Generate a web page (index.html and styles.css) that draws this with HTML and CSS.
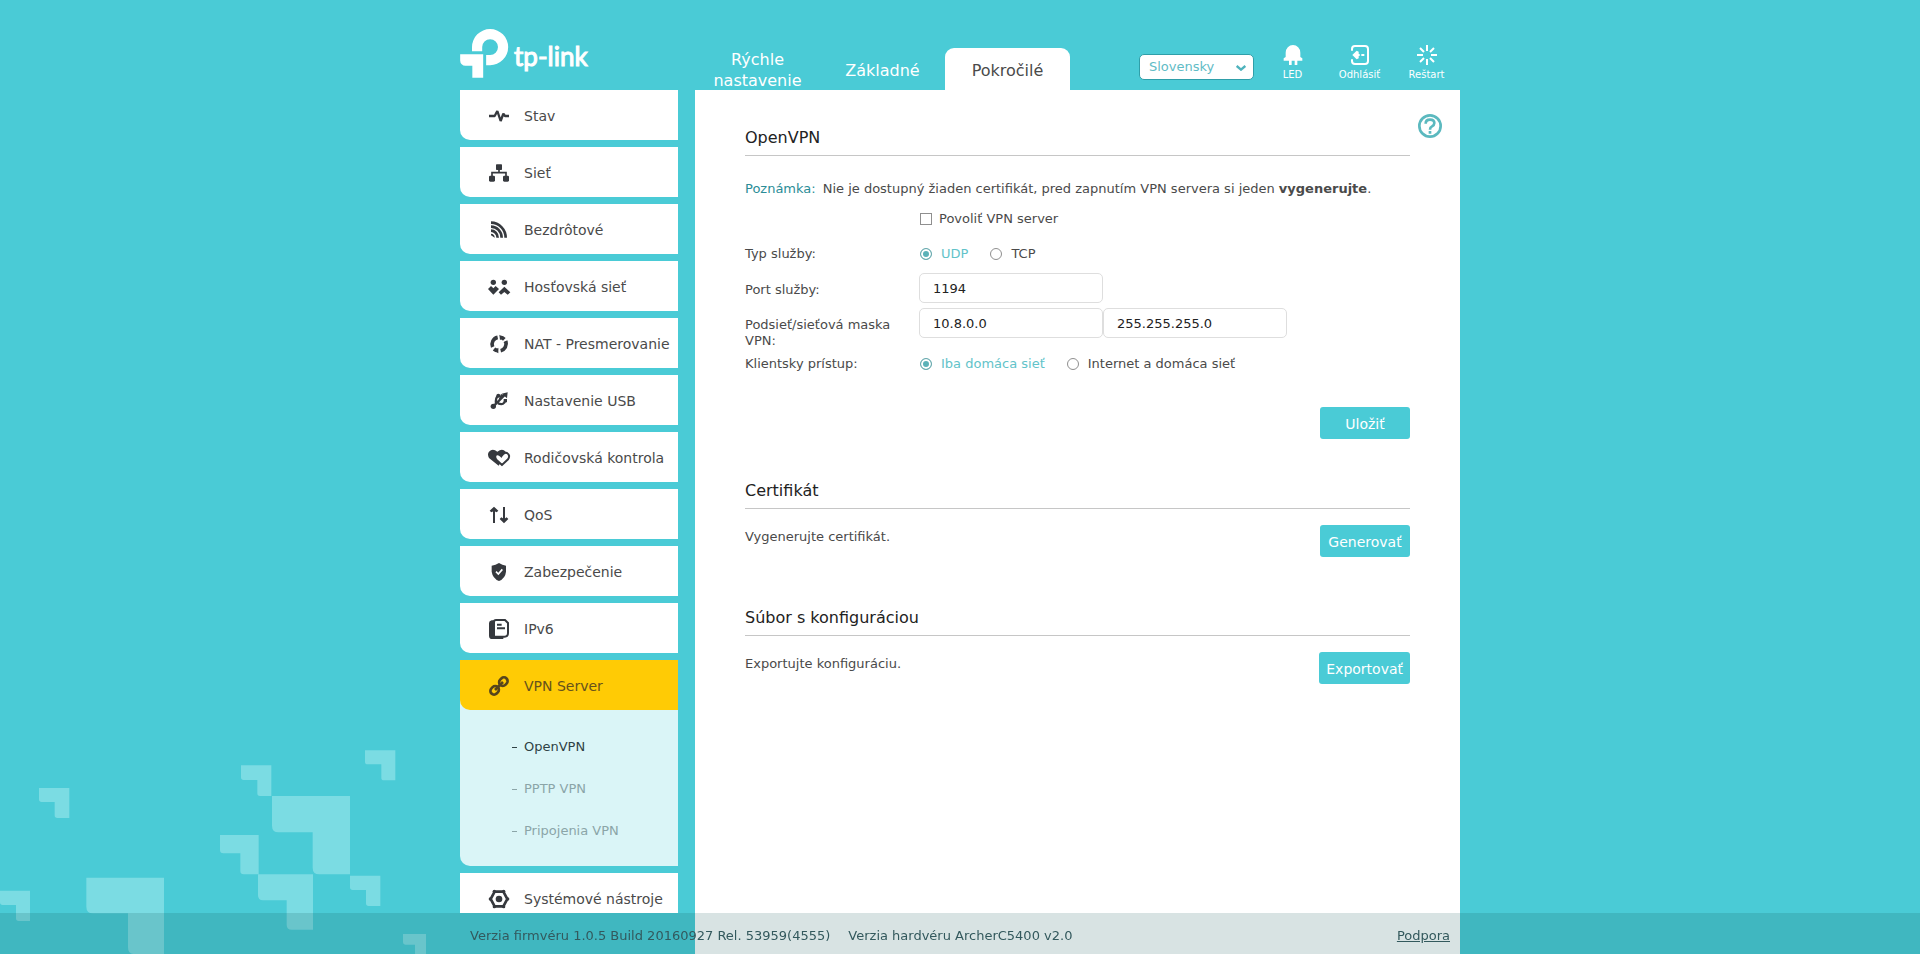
FILE: index.html
```html
<!DOCTYPE html>
<html lang="sk">
<head>
<meta charset="utf-8">
<meta name="viewport" content="width=device-width, initial-scale=1">
<title>tp-link – OpenVPN</title>
<link rel="stylesheet" href="styles.css">
</head>
<body>
<svg class="backdrop" viewBox="0 0 1350 672" aria-hidden="true">
  <path d="M117 174H208V264H172Q164 264 164 256V216H125Q117 216 117 208Z"/>
  <path d="M723 106H814V198H780Q772 198 772 190V150H731Q723 150 723 142Z"/>
  <path d="M1095 61H1186V151H1152Q1144 151 1144 143V103H1103Q1095 103 1095 95Z"/>
  <path d="M816 198H1050V433H958Q938 433 938 413V307H836Q816 307 816 287Z"/>
  <path d="M660 315H776V433H731Q721 433 721 423V370H670Q660 370 660 360Z"/>
  <path d="M774 433H939V599H875Q860 599 860 584V511H789Q774 511 774 496Z"/>
  <path d="M1050 437H1141V528H1106Q1098 528 1098 520V480H1058Q1050 480 1050 472Z"/>
  <path d="M259 443H492V672H400Q384 672 384 652V550H279Q259 550 259 530Z"/>
  <path d="M0 482H90V573H56Q48 573 48 565V525H8Q0 525 0 517Z"/>
  <path d="M1209 612H1278V672H1245V644H1216Q1209 644 1209 637Z"/>
</svg>

<div class="page">
  <header class="header">
    <a class="logo" href="#" aria-label="tp-link">
      <svg class="logo-mark" viewBox="0 0 148 149" aria-hidden="true">
        <path d="M36 68V55A55 55 0 0 1 91 0a55 55 0 0 1 0 110H79V79h12a24 24 0 1 0-24-24V68z"/>
        <path d="M0 77H70V148H37V112H16A16 16 0 0 1 0 96Z"/>
      </svg>
      <span class="logo-text">tp-link</span>
    </a>
    <nav class="tabs" aria-label="Režim">
      <a class="tab" href="#">Rýchle nastavenie</a>
      <a class="tab" href="#">Základné</a>
      <a class="tab tab-active" href="#" aria-current="page">Pokročilé</a>
    </nav>
    <div class="tools">
      <div class="language">
        <select aria-label="Jazyk"><option>Slovensky</option></select>
        <svg class="chevron" viewBox="0 0 30 18" aria-hidden="true"><path d="M2 3L15 14L28 3"/></svg>
      </div>
      <button class="tool" type="button">
        <svg viewBox="0 0 60 60" aria-hidden="true"><path d="M8 36V23A22 23 0 0 1 52 23V36L58 40V47H43V60H35V47H26V60H18V47H2V40L8 36Z" fill="currentColor"/></svg>
        LED
      </button>
      <button class="tool" type="button">
        <svg viewBox="0 0 60 60" aria-hidden="true"><g fill="none" stroke="currentColor" stroke-width="6"><path d="M6 17V12Q6 3 15 3H45Q54 3 54 12V48Q54 57 45 57H15Q6 57 6 48V43"/><path d="M19 30H29M34 30H43"/></g><path d="M7 30L20 17L26 20V40L20 43Z" fill="currentColor"/></svg>
        Odhlásiť
      </button>
      <button class="tool" type="button">
        <svg viewBox="0 0 60 60" aria-hidden="true"><path fill="none" stroke="currentColor" stroke-width="6" d="M30 0V18M30 42V60M0 30H18M42 30H60M9 9L21 21M39 39L51 51M51 9L39 21M21 39L9 51"/></svg>
        Reštart
      </button>
    </div>
  </header>

  <div class="columns">
    <nav class="menu" aria-label="Menu">
      <a class="item" href="#"><svg viewBox="0 0 60 60" aria-hidden="true"><path class="line" d="M0 30H17L25 15L35 45L43 23L48 30H60" stroke-width="7" stroke-linejoin="bevel"/></svg>Stav</a>
      <a class="item" href="#"><svg viewBox="0 0 60 60" aria-hidden="true"><rect x="21" y="4" width="18" height="17" rx="2"/><rect x="0" y="38" width="18" height="18" rx="4"/><rect x="42" y="38" width="18" height="18" rx="4"/><path class="line" stroke-width="5" d="M30 20V30M9 39V29H51V39"/></svg>Sieť</a>
      <a class="item" href="#"><svg viewBox="0 0 60 60" aria-hidden="true"><path class="line" stroke-width="8" d="M6 8A44 45 0 0 1 50 53M6 20A32 33 0 0 1 38 53M6 32A20 21 0 0 1 26 53"/><path d="M6 41A12 12 0 0 1 17 53L6 46Z"/></svg>Bezdrôtové</a>
      <a class="item" href="#"><svg viewBox="0 0 60 60" aria-hidden="true"><circle cx="13" cy="16" r="8"/><circle cx="46" cy="16" r="8"/><path d="M-3 36L6 27L13 34L20 27L30 36L13 53Z"/><path d="M46 29L64 46L56 53L46 45L36 53L29 46Z"/></svg>Hosťovská sieť</a>
      <a class="item" href="#"><svg viewBox="0 0 60 60" aria-hidden="true"><path class="line" stroke-width="11" d="M34 10A21 21 0 0 1 46 16M50 22A21 21 0 0 1 35 50M27 50A21 21 0 0 1 15 45M11 39A21 21 0 0 1 26 10"/><path d="M31 2L42 10L33 18ZM43 25L55 19L56 31ZM28 58L18 50L28 41Z"/></svg>NAT - Presmerovanie</a>
      <a class="item" href="#"><svg viewBox="0 0 60 60" aria-hidden="true"><circle cx="13" cy="46" r="8"/><circle cx="28" cy="14" r="6"/><path class="line" stroke-width="7" d="M13 46L47 12M21 38Q19 19 28 14M27 37Q46 44 49 28M32 27L39 10"/><path d="M38 8L56 4L54 22ZM44 24H54V34H44Z"/></svg>Nastavenie USB</a>
      <a class="item" href="#"><svg viewBox="0 0 60 60" aria-hidden="true"><path d="M29 53L0 30Q-6 18 0 11Q11 0 25 11Q40 0 50 11L38 38Z"/><path class="heart" d="M39 51L22 35Q16 26 21 20Q28 15 37 25Q46 11 54 15Q65 22 57 34Z"/></svg>Rodičovská kontrola</a>
      <a class="item" href="#"><svg viewBox="0 0 60 60" aria-hidden="true"><path class="line" stroke-width="6" d="M15 54V14M45 6V46"/><path d="M15 5L28 17L23 22L15 18L7 22L2 17ZM45 55L58 42L53 37L45 42L37 37L32 42Z"/></svg>QoS</a>
      <a class="item" href="#"><svg viewBox="0 0 60 60" aria-hidden="true"><path d="M30 3Q40 9 51 11V29Q49 49 30 57Q11 49 8 29V11Q20 9 30 3Z"/><path class="tick" d="M21 29L28 36L40 22"/></svg>Zabezpečenie</a>
      <a class="item" href="#"><svg viewBox="0 0 60 60" aria-hidden="true"><path d="M8 4H16V52H43V60H10Q0 60 0 50V12Q0 6 8 4Z"/><path class="line" stroke-width="6" d="M15 9Q15 3 21 3H48L57 12V42Q57 53 47 53H15ZM24 17H38M24 28H48"/></svg>IPv6</a>
      <a class="item item-active" href="#" aria-current="true"><svg viewBox="0 0 60 60" aria-hidden="true"><g transform="rotate(-45 30 30)"><rect class="line" x="-2" y="19" width="27" height="22" rx="11" stroke-width="8"/><rect class="line" x="35" y="19" width="27" height="22" rx="11" stroke-width="8"/><path class="line" stroke-width="8" d="M13 30H47"/></g></svg>VPN Server</a>
      <ul class="submenu">
        <li><a class="sub sub-active" href="#">OpenVPN</a></li>
        <li><a class="sub" href="#">PPTP VPN</a></li>
        <li><a class="sub" href="#">Pripojenia VPN</a></li>
      </ul>
      <a class="item" href="#"><svg viewBox="0 0 60 60" aria-hidden="true"><path class="line" stroke-width="8" d="M17 8H43L55 30L43 52H17L5 30Z"/><circle cx="30" cy="30" r="10"/><circle cx="16" cy="7" r="5"/><circle cx="44" cy="7" r="5"/><circle cx="4" cy="30" r="5"/><circle cx="56" cy="30" r="5"/><circle cx="16" cy="53" r="5"/><circle cx="44" cy="53" r="5"/></svg>Systémové nástroje</a>
    </nav>

    <main class="content">
      <button class="help" type="button" aria-label="Pomoc">
        <svg viewBox="0 0 72 72" aria-hidden="true"><circle cx="36" cy="36" r="32"/><path d="M23 29Q23 17 36 17Q49 17 49 27Q49 33 42 37Q36 40 36 47M36 51V59"/></svg>
      </button>

      <section class="section">
        <h2>OpenVPN</h2>
        <p class="note"><span class="note-tag">Poznámka:</span>Nie je dostupný žiaden certifikát, pred zapnutím VPN servera si jeden <b>vygenerujte</b>.</p>
        <form>
          <div class="row row-check">
            <label class="choice"><input type="checkbox">Povoliť VPN server</label>
          </div>
          <div class="row row-type" role="radiogroup" aria-labelledby="type-label">
            <span id="type-label">Typ služby:</span>
            <div class="choices">
              <label class="choice"><input type="radio" name="type" checked><span>UDP</span></label>
              <label class="choice"><input type="radio" name="type"><span>TCP</span></label>
            </div>
          </div>
          <div class="row row-field">
            <label for="port">Port služby:</label>
            <input class="text" id="port" type="text" value="1194">
          </div>
          <div class="row row-field">
            <label for="subnet">Podsieť/sieťová maska VPN:</label>
            <div class="pair">
              <input class="text" id="subnet" type="text" value="10.8.0.0">
              <input class="text" type="text" value="255.255.255.0" aria-label="Sieťová maska VPN">
            </div>
          </div>
          <div class="row row-access" role="radiogroup" aria-labelledby="access-label">
            <span id="access-label">Klientsky prístup:</span>
            <div class="choices">
              <label class="choice"><input type="radio" name="access" checked><span>Iba domáca sieť</span></label>
              <label class="choice"><input type="radio" name="access"><span>Internet a domáca sieť</span></label>
            </div>
          </div>
          <div class="submit"><button class="action" type="button">Uložiť</button></div>
        </form>
      </section>

      <section class="section">
        <h2>Certifikát</h2>
        <div class="task"><p>Vygenerujte certifikát.</p><button class="action" type="button">Generovať</button></div>
      </section>

      <section class="section">
        <h2>Súbor s konfiguráciou</h2>
        <div class="task"><p>Exportujte konfiguráciu.</p><button class="action" type="button">Exportovať</button></div>
      </section>
    </main>
  </div>
</div>

<footer class="footer">
  <div class="footer-inner">
    <span>Verzia firmvéru 1.0.5 Build 20160927 Rel. 53959(4555)</span>
    <span>Verzia hardvéru ArcherC5400 v2.0</span>
    <a class="support" href="#">Podpora</a>
  </div>
</footer>
</body>
</html>
```

FILE: styles.css
```css
:root {
  --teal: #4acbd6;
  --ink: #4a4a4a;
  --icon: #36393e;
  --header: 90px;
  --footer: 41px;
}

* {
  box-sizing: border-box;
}

body {
  margin: 0;
  height: 100vh;
  overflow: hidden;
  background: var(--teal);
  color: var(--ink);
  font: 13px/16px "DejaVu Sans", Verdana, sans-serif;
}

a {
  color: inherit;
  text-decoration: none;
}

h2,
p,
ul {
  margin: 0;
  padding: 0;
}

button,
input,
select {
  font: inherit;
}

.backdrop {
  position: fixed;
  left: 0;
  bottom: 0;
  width: 450px;
  fill: #7bdce3;
}

.page {
  position: relative;
  display: flex;
  flex-direction: column;
  max-width: 1000px;
  min-height: 100vh;
  margin: 0 auto;
}

/* Header */
.header {
  display: flex;
  height: var(--header);
  color: #fff;
}

.logo {
  display: flex;
  align-items: flex-start;
  gap: 5px;
  width: 235px;
  padding-top: 29px;
}

.logo-mark {
  width: 49px;
  height: 49px;
  fill: #fff;
}

.logo-text {
  padding-top: 9px;
  font: 26px/36px Lato, sans-serif;
  -webkit-text-stroke: 1px #fff;
}

.tabs {
  display: flex;
  align-items: flex-end;
}

.tab {
  display: flex;
  align-items: center;
  justify-content: center;
  width: 125px;
  height: 42px;
  padding-top: 2px;
  font-size: 16px;
  line-height: 21px;
  text-align: center;
}

.tab-active {
  border-radius: 9px 9px 0 0;
  background: #fff;
  color: var(--ink);
}

.tools {
  display: flex;
  align-items: flex-start;
  margin-left: auto;
}

.language {
  position: relative;
  margin: 54px 5px 0 0;
}

.language select {
  appearance: none;
  display: block;
  width: 115px;
  height: 26px;
  padding: 0 9px;
  border: 1px solid #2f9fa9;
  border-radius: 5px;
  background: #fff;
  color: #5fbcc6;
}

.chevron {
  position: absolute;
  top: 11px;
  right: 8px;
  width: 10px;
  height: 6px;
  fill: none;
  stroke: #4fb3bd;
  stroke-width: 7;
  pointer-events: none;
}

.tool {
  display: flex;
  flex-direction: column;
  align-items: center;
  gap: 4px;
  width: 67px;
  margin-top: 45px;
  padding: 0;
  border: 0;
  background: none;
  color: #fff;
  font-size: 10px;
  line-height: 12px;
}

.tool svg {
  width: 20px;
  height: 20px;
}

.columns {
  display: flex;
  flex: 1;
  gap: 17px;
}

/* Side menu */
.menu {
  flex: 0 0 218px;
  max-height: calc(100vh - var(--header) - var(--footer));
  overflow: hidden;
}

.item {
  display: flex;
  align-items: center;
  gap: 15px;
  height: 50px;
  margin-bottom: 7px;
  padding: 1px 0 0 29px;
  border-bottom-left-radius: 10px;
  background: #fff;
  font-size: 14px;
  white-space: nowrap;
}

.item svg {
  flex: none;
  width: 20px;
  height: 20px;
  overflow: visible;
  fill: var(--icon);
}

.item .line {
  fill: none;
  stroke: var(--icon);
}

.item .heart {
  fill: #fff;
  stroke: var(--icon);
  stroke-width: 6;
}

.item .tick {
  fill: none;
  stroke: #fff;
  stroke-width: 5;
}

.item-active {
  --icon: #57451c;
  position: relative;
  margin-bottom: 0;
  background: #ffcb05;
  color: #66521c;
}

.submenu {
  margin: -10px 0 7px;
  padding: 26px 0 14px;
  border-bottom-left-radius: 10px;
  background: #daf5f7;
  list-style: none;
}

.sub {
  display: flex;
  align-items: center;
  height: 42px;
  padding-left: 52px;
  color: #8ba5a8;
}

.sub::before {
  content: "";
  width: 5px;
  height: 1px;
  margin-right: 7px;
  background: currentColor;
}

.sub-active {
  color: #2f4245;
}

/* Content */
.content {
  position: relative;
  flex: 1;
  padding: 37px 50px 50px;
  background: #fff;
}

.help {
  position: absolute;
  top: 24px;
  right: 18px;
  width: 24px;
  height: 24px;
  padding: 0;
  border: 0;
  background: none;
}

.help svg {
  display: block;
  fill: none;
  stroke: #5bb9bf;
  stroke-width: 8;
}

h2 {
  margin-bottom: 16px;
  padding: 1px 0 7px;
  border-bottom: 1px solid #c6c6c6;
  color: #222;
  font-size: 16px;
  font-weight: 400;
  line-height: 20px;
}

.note {
  margin-top: 25px;
}

.note-tag {
  margin-right: 7px;
  color: #2b8d97;
}

.row {
  display: grid;
  grid-template-columns: 174px 1fr;
  align-items: start;
}

.row-check {
  margin-top: 14px;
}

.row-check .choice {
  grid-column: 2;
  gap: 7px;
}

.row-type {
  margin: 19px 0 11px;
}

.row-field {
  margin-bottom: 5px;
}

.row-field label {
  padding: 9px 20px 0 0;
}

.row-access {
  margin-top: 7px;
}

.choices {
  display: flex;
  gap: 21px;
}

.choice {
  display: flex;
  align-items: center;
  gap: 9px;
}

.choice input {
  appearance: none;
  width: 12px;
  height: 12px;
  margin: 0 0 0 1px;
  border: 1px solid #8f8f8f;
  background: #fff;
}

.choice input[type="radio"] {
  border-radius: 50%;
}

.choice input[type="radio"]:checked {
  border-color: #6aa9ae;
  background: #5bb2b8;
  box-shadow: inset 0 0 0 2px #fff;
}

.choice input[type="radio"]:checked + span {
  color: #62c3c9;
}

.text {
  width: 184px;
  height: 30px;
  padding: 0 13px;
  border: 1px solid #dedede;
  border-radius: 5px;
  background: #fff;
  color: #222;
}

.pair {
  display: flex;
}

.submit {
  display: flex;
  justify-content: flex-end;
  margin: 35px 0 41px;
}

.action {
  min-width: 90px;
  height: 32px;
  padding: 1px 7px 0;
  border: 0;
  border-radius: 3px;
  background: var(--teal);
  color: #fff;
  font-size: 14px;
}

.task {
  display: flex;
  align-items: flex-start;
  justify-content: space-between;
  margin-bottom: 50px;
}

.task p {
  padding-top: 4px;
}

/* Footer */
.footer {
  position: fixed;
  right: 0;
  bottom: 0;
  left: 0;
  height: var(--footer);
  background: rgba(13, 83, 81, 0.16);
}

.footer-inner {
  display: flex;
  align-items: center;
  gap: 18px;
  max-width: 1000px;
  height: 100%;
  margin: 0 auto;
  padding: 5px 10px 0;
  color: #33595d;
}

.support {
  margin-left: auto;
  text-decoration: underline;
}
```
